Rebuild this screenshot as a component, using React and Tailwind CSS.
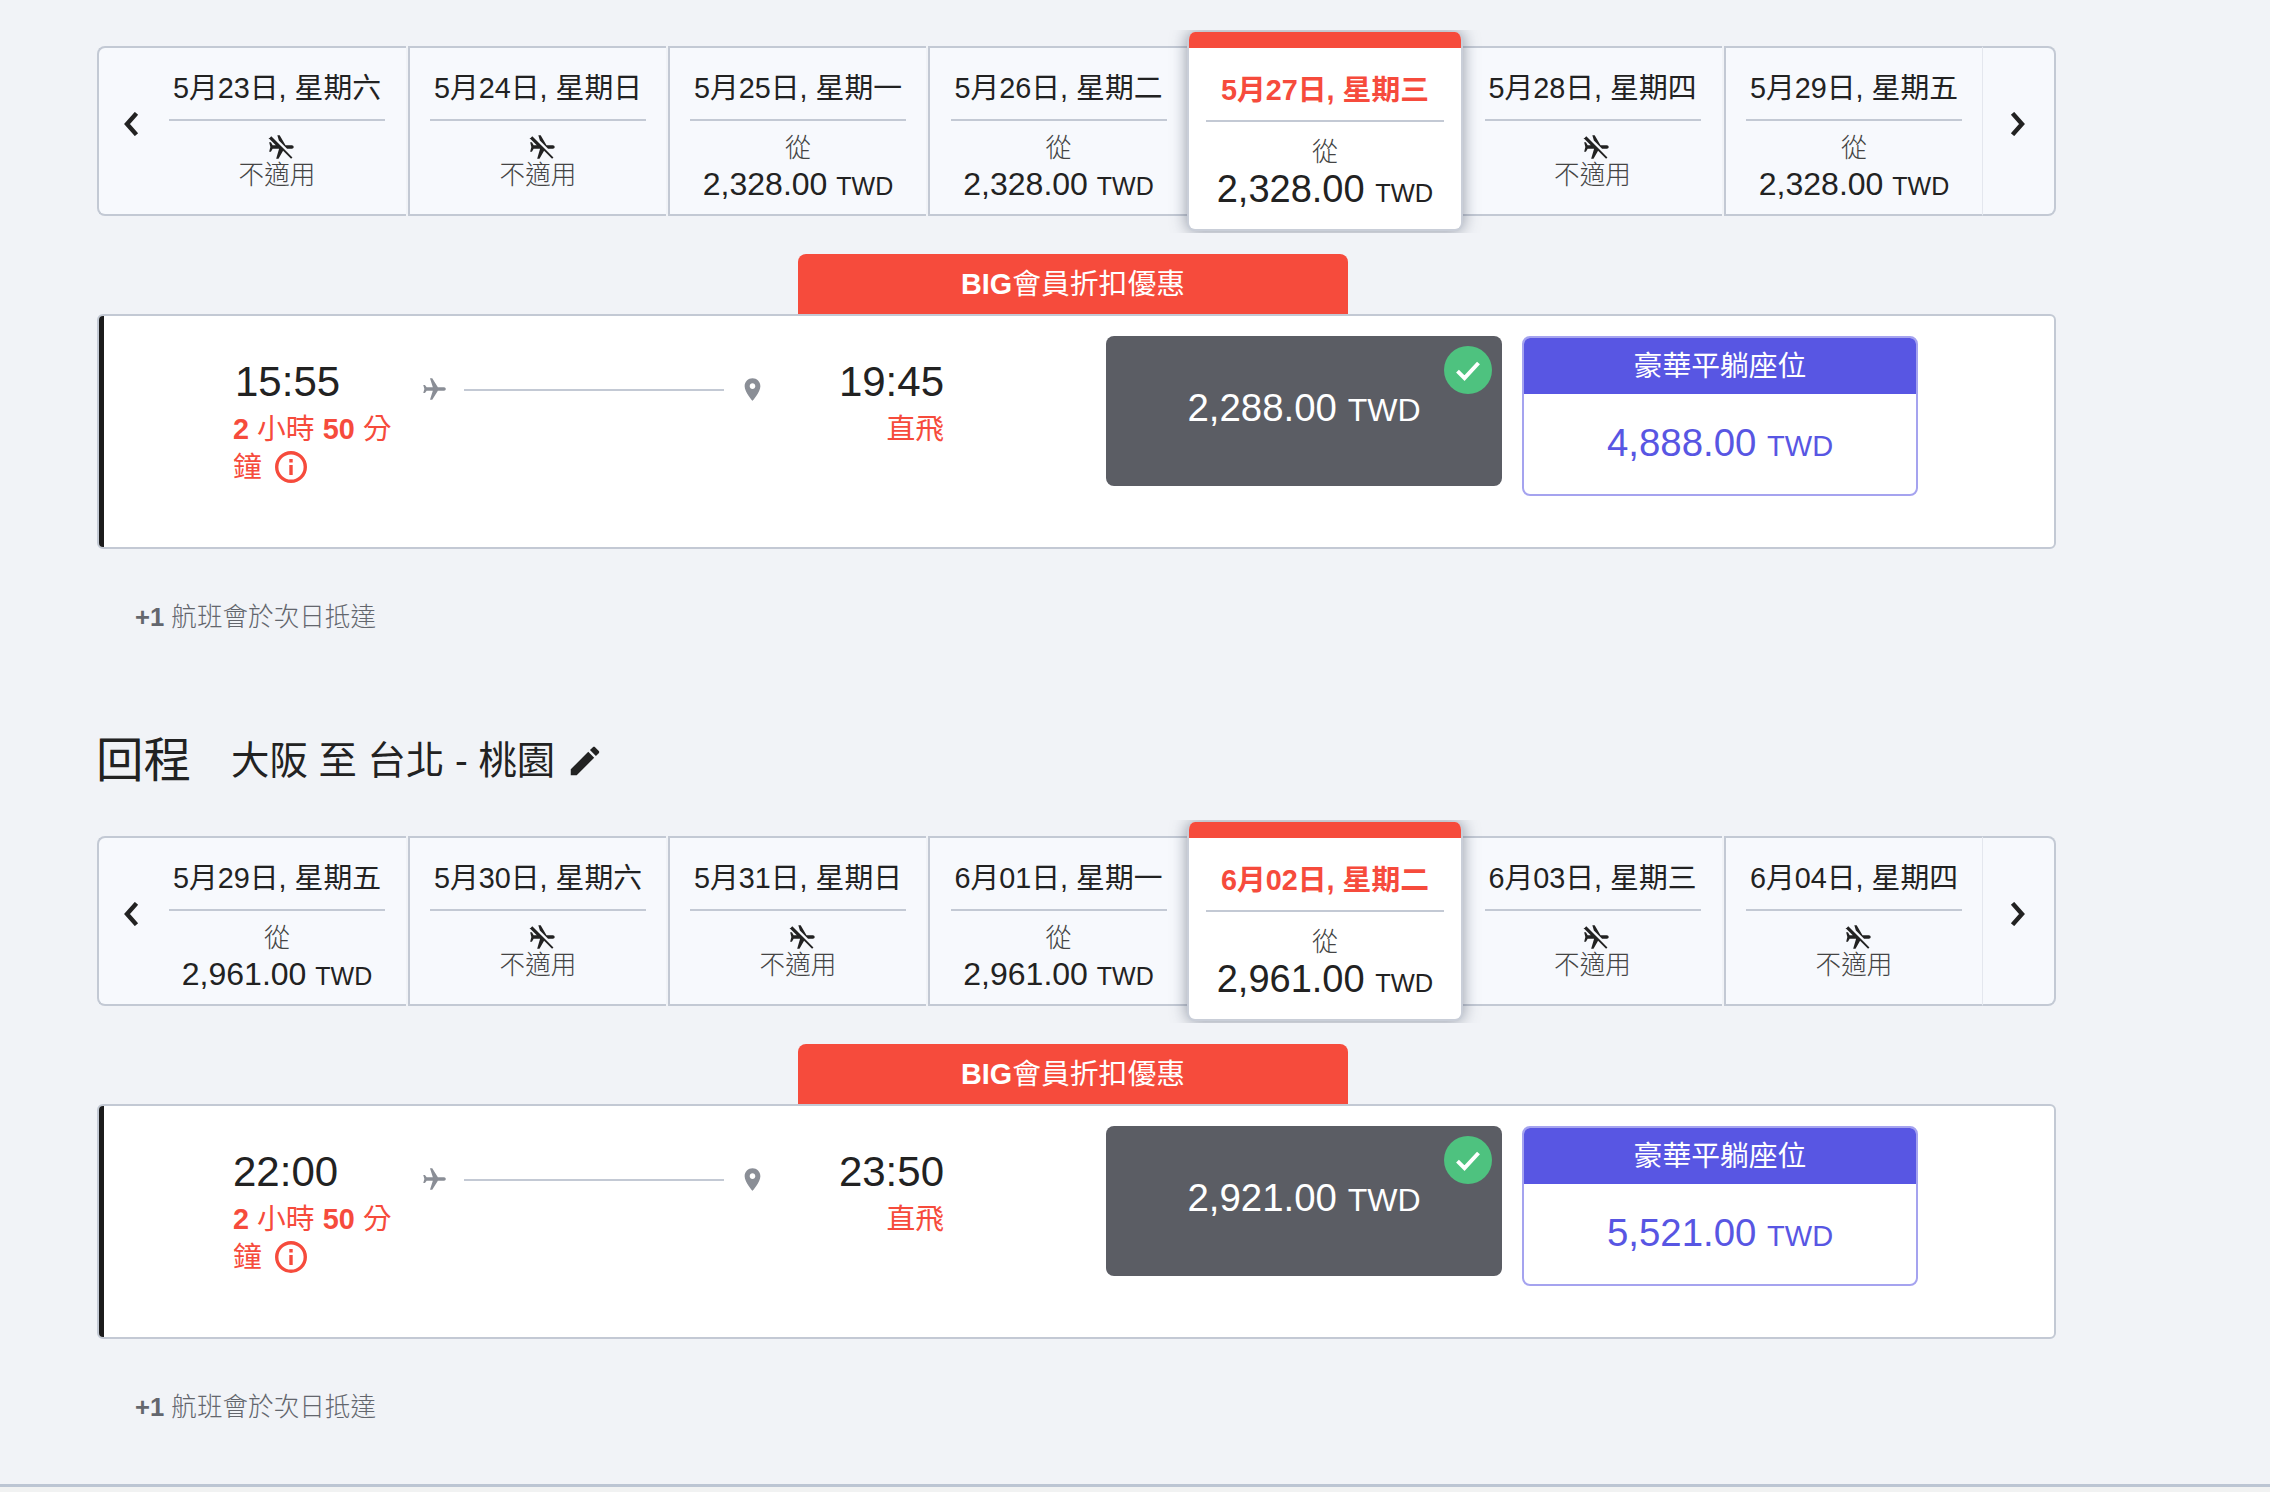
import React from "react";

const NoFlight = () => (
  <svg viewBox="0 0 24 24" className="w-[28px] h-[28px] block ml-[10px]" fill="#222">
    <path
      transform="rotate(90 12 12) translate(24 0) scale(-1 1)"
      d="M10.5 7.67V3.5c0-.83.67-1.5 1.5-1.5s1.5.67 1.5 1.5V9l8.5 5v2l-4.49-1.32-7.01-7.01zm9.28 14.94l1.41-1.41-7.69-7.7-3.05-3.05-7.41-7.41L2 4.22l6.86 6.86L2 14.99V17l8.5-2.5V20L8 21.5V23l4-1 4 1v-1.5L13.5 20v-2.67l6.28 6.28z"
    />
  </svg>
);

const Price = ({ value, big }) => (
  <div className={big ? "text-[38px] leading-[39px] text-[#222]" : "text-[32px] leading-[36px] text-[#222]"}>
    {value} <span className={big ? "text-[25.5px]" : "text-[25px]"}>TWD</span>
  </div>
);

const Cell = ({ date, price, className }) => (
  <div className={`bg-[#f7f9fd] border-y-2 border-[#c3c9d4] flex flex-col items-center pt-[20px] ${className}`}>
    <div className="text-[28.8px] leading-[40px] text-[#222] whitespace-nowrap">{date}</div>
    <div className="w-[216px] h-[2px] bg-[#c3c9d4] mt-[11px] shrink-0" />
    {price ? (
      <div className="flex flex-col items-center mt-[10px]">
        <div className="text-[26px] leading-[35px] font-light text-[#444]">從</div>
        <Price value={price} />
      </div>
    ) : (
      <div className="flex flex-col items-center mt-[12px]">
        <NoFlight />
        <div className="text-[25.6px] leading-[28px] font-light text-[#444]">不適用</div>
      </div>
    )}
  </div>
);

const Selected = ({ date, price }) => (
  <div className="relative z-10 w-[276px] -mt-[14px] -mb-[15px] bg-white rounded-[8px] border-2 border-t-0 border-[#c9ced8] overflow-hidden shadow-[0_0_16px_rgba(60,70,90,0.55)] [clip-path:inset(-2px_-20px_-2px_-20px)] flex flex-col items-center shrink-0">
    <div className="w-full h-[16px] bg-[#f64b3c] shrink-0" />
    <div className="text-[28.8px] leading-[40px] font-semibold text-[#f64b3c] mt-[22px] whitespace-nowrap">{date}</div>
    <div className="w-[238px] h-[2px] bg-[#c3c9d4] mt-[10px] shrink-0" />
    <div className="text-[26px] leading-[36px] font-light text-[#444] mt-[12px]">從</div>
    <Price value={price} big />
  </div>
);

const Chevron = ({ right }) => (
  <svg viewBox="0 0 16 24" className="w-[16px] h-[24px]" fill="none" stroke="#222" strokeWidth="4.4" strokeLinecap="square">
    {right ? <path d="M4 3l8 9-8 9" /> : <path d="M12 3l-8 9 8 9" />}
  </svg>
);

const CELL_CLASSES = [
  "w-[258px]",
  "ml-[2px] w-[258px] border-l-2",
  "ml-[2px] w-[258px] border-l-2",
  "ml-[2px] w-[259px] border-l-2",
  "",
  "w-[259px]",
  "ml-[2px] w-[258px] border-l-2",
];

const Strip = ({ days, sel }) => (
  <div className="flex h-[170px]">
    <div className="w-[51px] shrink-0 bg-[#f7f9fd] border-y-2 border-l-2 border-[#c3c9d4] rounded-l-[8px] flex items-center justify-center pb-[14px] pl-[14px]">
      <Chevron />
    </div>
    {days.map((d, i) =>
      i === sel ? (
        <Selected key={i} date={d[0]} price={d[1]} />
      ) : (
        <Cell key={i} date={d[0]} price={d[1]} className={`shrink-0 ${CELL_CLASSES[i]}`} />
      )
    )}
    <div className="flex-1 bg-[#f7f9fd] border-y-2 border-r-2 border-l border-l-[#e4e7ee] border-y-[#c3c9d4] border-r-[#c3c9d4] rounded-r-[8px] flex items-center pl-[27px] pb-[14px]">
      <Chevron right />
    </div>
  </div>
);

const Plane = () => (
  <svg viewBox="0 0 24 24" className="w-[27px] h-[27px] block" fill="#8a8e96">
    <path
      transform="rotate(90 12 12)"
      d="M21 16v-2l-8-5V3.5c0-.83-.67-1.5-1.5-1.5S10 2.67 10 3.5V9l-8 5v2l8-2.5V19l-2 1.5V22l3.5-1 3.5 1v-1.5L13 19v-5.5l8 2.5z"
    />
  </svg>
);

const Pin = () => (
  <svg viewBox="0 0 24 24" className="w-[27px] h-[27px] block" fill="#8a8e96">
    <path d="M12 2C8.13 2 5 5.13 5 9c0 5.25 7 13 7 13s7-7.75 7-13c0-3.87-3.13-7-7-7zm0 9.5c-1.38 0-2.5-1.12-2.5-2.5s1.12-2.5 2.5-2.5 2.5 1.12 2.5 2.5-1.12 2.5-2.5 2.5z" />
  </svg>
);

const Info = () => (
  <svg viewBox="0 0 32 32" className="w-[32px] h-[32px] block ml-[13px]" fill="none" stroke="#f64b3c" strokeWidth="3.4">
    <circle cx="16" cy="16" r="14.3" />
    <path d="M16 14v10" />
    <path d="M16 8v3.4" />
  </svg>
);

const Flight = ({ dep, arr, fare, biz }) => (
  <>
    <div className="w-[550px] h-[60px] ml-[701px] mt-[38px] bg-[#f64b3c] rounded-t-[8px] flex items-center justify-center text-[28.8px] text-white pt-[2px]">
      <span><b className="font-bold">BIG</b>會員折扣優惠</span>
    </div>
    <div className="h-[235px] bg-white border-2 border-[#c3c9d4] rounded-[6px] flex items-start overflow-hidden">
      <div className="w-[5px] h-full bg-[#1c1c1c] shrink-0" />
      <div className="shrink-0 w-[170px] mt-[37px] ml-[129px]">
        <div className={`text-[42px] leading-[57px] text-[#222] ${dep === "15:55" ? "ml-[2px]" : ""}`}>{dep}</div>
        <div className="text-[28.8px] leading-[38px] text-[#f64b3c] whitespace-nowrap">
          <b className="font-semibold">2</b> 小時 <b className="font-semibold">50</b> 分
        </div>
        <div className="flex items-center text-[28.8px] leading-[38px] text-[#f64b3c]">
          <span>鐘</span>
          <Info />
        </div>
      </div>
      <div className="flex items-center mt-[60px] ml-[18px] shrink-0">
        <Plane />
        <div className="w-[260px] h-[2px] bg-[#c3c9d4] ml-[16px]" />
        <div className="ml-[15px]"><Pin /></div>
      </div>
      <div className="w-[178px] shrink-0 text-right mt-[37px]">
        <div className="text-[42px] leading-[57px] text-[#222]">{arr}</div>
        <div className="text-[28.8px] leading-[38px] text-[#f64b3c]">直飛</div>
      </div>
      <div className="relative w-[396px] h-[150px] ml-[162px] mt-[20px] bg-[#5b5d64] rounded-[8px] shrink-0 flex justify-center pt-[48px] text-white">
        <div className="text-[38.4px] leading-[48px]">{fare} <span className="text-[32px]">TWD</span></div>
        <div className="absolute right-[10px] top-[10px] w-[48px] h-[48px] rounded-full bg-[#4ec27f] flex items-center justify-center">
          <svg viewBox="0 0 24 24" className="w-[28px] h-[28px]" fill="none" stroke="#fff" strokeWidth="3.4"><path d="M3 13l6 6L21 6" /></svg>
        </div>
      </div>
      <div className="w-[396px] h-[160px] ml-[20px] mt-[20px] bg-white border-2 border-[#a5a3ef] rounded-[8px] overflow-hidden shrink-0 flex flex-col">
        <div className="h-[56px] bg-[#5856e3] flex items-center justify-center text-[28.8px] text-white pt-[2px]">豪華平躺座位</div>
        <div className="flex-1 flex items-center justify-center text-[38.4px] text-[#5856e3] pb-[2px]">
          <div>{biz} <span className="text-[29px]">TWD</span></div>
        </div>
      </div>
    </div>
    <div className="mt-[52px] ml-[38px] text-[25.6px] leading-[33px] text-[#63666d] font-light">
      <b className="font-bold">+1</b> 航班會於次日抵達
    </div>
  </>
);

const OUT = [
  ["5月23日, 星期六"],
  ["5月24日, 星期日"],
  ["5月25日, 星期一", "2,328.00"],
  ["5月26日, 星期二", "2,328.00"],
  ["5月27日, 星期三", "2,328.00"],
  ["5月28日, 星期四"],
  ["5月29日, 星期五", "2,328.00"],
];
const RET = [
  ["5月29日, 星期五", "2,961.00"],
  ["5月30日, 星期六"],
  ["5月31日, 星期日"],
  ["6月01日, 星期一", "2,961.00"],
  ["6月02日, 星期二", "2,961.00"],
  ["6月03日, 星期三"],
  ["6月04日, 星期四"],
];

export default function App() {
  return (
    <div className="w-[2270px] h-[1492px] overflow-hidden bg-[#f1f3f7] font-['Liberation_Sans','Noto_Sans_CJK_TC',sans-serif] flex flex-col">
      <div className="w-[1959px] ml-[97px] pt-[46px] h-[1484px] shrink-0">
        <Strip days={OUT} sel={4} />
        <Flight dep="15:55" arr="19:45" fare="2,288.00" biz="4,888.00" />
        <div className="flex items-center h-[56px] mt-[99px] text-[#222]">
          <div className="text-[47.5px] leading-[56px] -ml-[1px]">回程</div>
          <div className="text-[38.4px] leading-[56px] ml-[40px] whitespace-nowrap">大阪 至 台北 - 桃園</div>
          <svg viewBox="0 0 24 24" className="w-[38px] h-[38px] ml-[11px]" fill="#222">
            <path d="M3 17.25V21h3.75L17.81 9.94l-3.75-3.75L3 17.25zM20.71 7.04c.39-.39.39-1.02 0-1.41l-2.34-2.34c-.39-.39-1.02-.39-1.41 0l-1.83 1.83 3.75 3.75 1.83-1.83z" />
          </svg>
        </div>
        <div className="mt-[47px]">
          <Strip days={RET} sel={4} />
        </div>
        <Flight dep="22:00" arr="23:50" fare="2,921.00" biz="5,521.00" />
      </div>
      <div className="h-[3px] bg-[#bcc5d3] shrink-0" />
      <div className="flex-1 bg-[#f1f2f2]" />
    </div>
  );
}
